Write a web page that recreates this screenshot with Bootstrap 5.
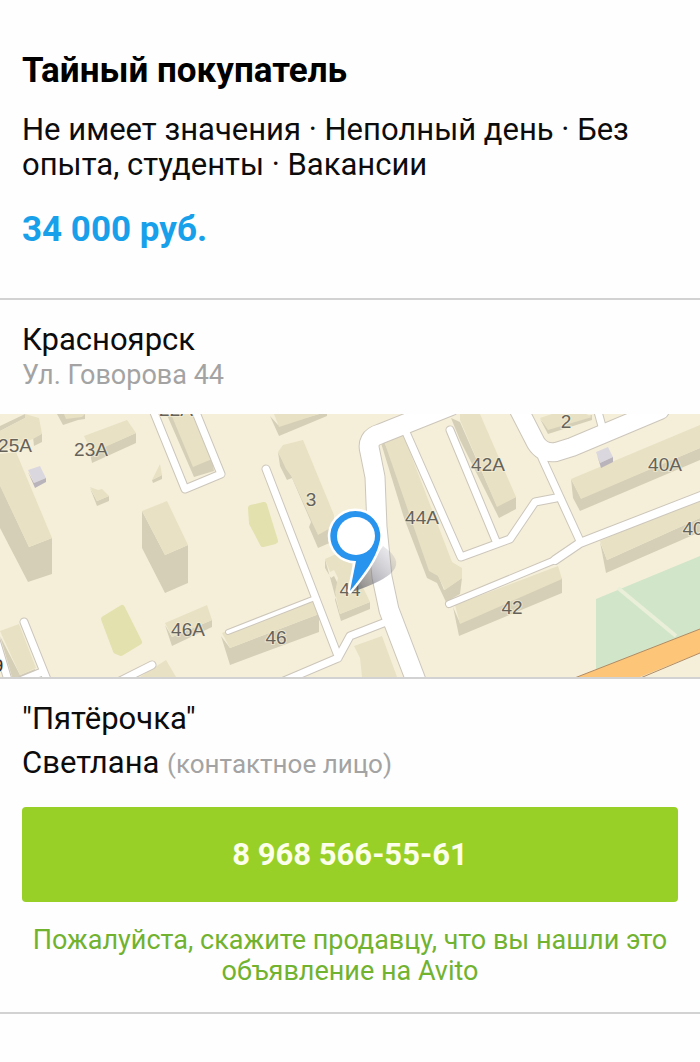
<!DOCTYPE html>
<html lang="ru">
<head>
<meta charset="utf-8">
<meta name="viewport" content="width=device-width, initial-scale=1">
<title>Тайный покупатель</title>
<link href="https://cdn.jsdelivr.net/npm/bootstrap@5.3.0/dist/css/bootstrap.min.css" rel="stylesheet">
<style>
  body { font-family: Roboto, "Liberation Sans", sans-serif; font-size: 31px; line-height: 35px; color: #0c0c0c; background: #fefefe; }
  .px-page { padding-left: 22px; padding-right: 22px; }
  .section-line { border-bottom: 2px solid #d2d2d2; }
  .summary { padding-top: 51px; padding-bottom: 48px; }
  .ad-title { font-size: 35px; line-height: 40px; font-weight: 700; color: #000; margin-bottom: 21px; }
  .ad-price { font-size: 35px; line-height: 40px; font-weight: 700; color: #18a0ea; margin-top: 28px; }
  .place { padding-top: 22px; padding-bottom: 21px; }
  .city-name { font: inherit; margin-bottom: 1px; }
  .soft { font-size: 27px; color: #a3a3a3; }
  .role { font-size: 26px; color: #a3a3a3; }
  .city-map { width: 100%; height: auto; }
  .contacts { padding-top: 22px; padding-bottom: 25px; }
  .company { margin-bottom: 9px; }
  .btn-call { --bs-btn-bg: #98d027; --bs-btn-color: #fcffea; --bs-btn-hover-bg: #8bc220; --bs-btn-hover-color: #fff; --bs-btn-border-width: 0; --bs-btn-border-radius: 4px; font-size: 31px; line-height: 35px; font-weight: 700; padding: 30px 12px; margin-top: 25px; }
  .note { font-size: 27px; line-height: 31px; color: #71b22f; margin-top: 23px; }
</style>
</head>
<body>
<main>
  <section class="summary px-page section-line">
    <h1 class="ad-title">Тайный покупатель</h1>
    <p class="mb-0">Не имеет значения · Неполный день · Без опыта, студенты · Вакансии</p>
    <p class="ad-price mb-0">34 000 руб.</p>
  </section>

  <section>
    <div class="place px-page">
      <h2 class="city-name">Красноярск</h2>
      <p class="soft mb-0">Ул. Говорова 44</p>
    </div>
    <svg class="city-map d-block section-line" viewBox="0 4 700 263" role="img" aria-label="Карта: Ул. Говорова 44">
      <defs>
        <linearGradient id="shade" x1="0" y1="1" x2="1" y2="0">
          <stop offset="0" stop-color="#55555f" stop-opacity=".75"/><stop offset="1" stop-color="#9090a0" stop-opacity=".1"/>
        </linearGradient>
      </defs>
      <rect y="4" width="700" height="263" fill="#f5efd9"/>
      <!-- grass and park -->
      <g fill="#e3e1ae" stroke="#e3e1ae" stroke-width="6" stroke-linejoin="round">
        <path d="M104 209L122 198L139 232L121 243L116 241Z"/><path d="M251 98L264 95L275 131L263 134L252 113Z"/>
      </g>
      <path d="M596 189L700 146V220L596 262Z" fill="#d1e5c9"/>
      <path d="M618 178L676 226" stroke="#e9efd8" stroke-width="4"/>
      <path d="M572 269L700 219V243L635 269Z" fill="#fdc578"/>
      <path d="M572 269L700 219M638 269L700 243" stroke="#b18b63" fill="none"/>
      <!-- building walls -->
      <g fill="#d6cfb8">
        <path d="M0 16L25 4V8L0 21ZM33 27L42 23V32L34 36Z"/>
        <path d="M57 4H85V9L78 10L63 15Z"/>
        <path d="M90 43L136 23V33L92 53Z"/>
        <path d="M167 5H172L193 54L212 49L214 61L194 67Z"/>
        <path d="M0 75L29 137L52 128V164L28 172L0 118Z"/>
        <path d="M90 78L97 91L109 86V91L97 96ZM152 70L162 65V69L153 73Z"/>
        <path d="M142 101L165 145L188 135V173L165 183L142 138Z"/>
        <path d="M165 215L172 227L212 210V217L172 236Z"/>
        <path d="M221 226L230 238L319 204V222L230 255Z"/>
        <path d="M0 226L20 265L35 259V267H12Z"/>
        <path d="M270 6L278 15L327 2V6L279 26Z"/>
        <path d="M278 42L280 56L287 70L292 68L311 112L309 117L318 138L334 131V116L318 123L292 67Z"/>
        <path d="M325 149L325 158L331 168L334 166L338 174L335 190L341 211L370 199V192L340 204Z"/>
        <path d="M381 33L384 31L444 180L462 168L460 184L446 192L437 173L427 168L404 108Z"/>
        <path d="M460 12L497 96L516 87V99L499 108L460 30L451 8Z"/>
        <path d="M540 9L548 18L592 5V10L548 24Z"/>
        <path d="M571 69L581 88L700 38V50L580 101L573 88Z"/>
        <path d="M600 132L607 150L700 108V122L606 163Z"/>
        <path d="M453 197L460 213L562 168V183L459 226Z"/>
      </g>
      <!-- roofs -->
      <g fill="#e8e1c4">
        <path d="M0 21L25 8V4L39 8L42 24L33 29L0 41Z"/>
        <path d="M64 4H85L82 7L66 9Z"/>
        <path d="M84 26L127 10L136 23L92 43Z"/>
        <path d="M171 4H198L212 49L193 57Z"/>
        <path d="M0 44L16 42L52 128L29 137L0 76Z"/>
        <path d="M90 77L98 80L102 79L109 86L97 91ZM152 70L160 54L162 65Z"/>
        <path d="M142 101L167 91L188 135L165 145Z"/>
        <path d="M165 213L207 195L212 210L172 227Z"/>
        <path d="M222 223L312 188L319 204L230 238Z"/>
        <path d="M0 221L19 214L36 258L20 265Z"/>
        <path d="M274 4H319L279 17Z"/>
        <path d="M278 42L283 35L303 30L334 105V116L318 125L311 110L292 67L286 59Z"/>
        <path d="M325 149L345 140L370 192L340 204L335 182L338 168L334 160L330 162Z"/>
        <path d="M354 236L382 226L397 267H362L360 248Z"/>
        <path d="M155 257L166 250L176 267H140Z"/>
        <path d="M384 31L403 24L452 152L462 158V168L445 180L438 166L429 161Z"/>
        <path d="M460 10V4H480L516 87L497 97Z"/>
        <path d="M540 8L552 4H586L592 7L548 20Z"/>
        <path d="M571 69L700 15V38L581 89Z"/>
        <path d="M600 131L700 88V108L607 150Z"/>
        <path d="M455 195L558 156L562 169L460 214Z"/>
      </g>
      <path d="M28 60L40 56L46 68L34 73ZM596 42L608 37L613 47L600 53Z" fill="#dbd7df"/>
      <path d="M34 73L46 68V72L35 78L28 62ZM600 53L613 47V52L601 58L597 45Z" fill="#b9b4bc"/>
      <!-- streets: outline first, surface over it -->
      <g fill="none" stroke="#ccc6bb" stroke-linejoin="round" stroke-linecap="round">
        <path stroke-width="9" d="M153 0L185 79L221 64L195 0M24 212L48 272M-4 230L8 270M20 271L42 262M118 272L152 255M266 59L338 246M338 248L350 226L386 212M338 248L284 271M405 20L461 147L510 129L535 92L556 88M450 20L496 131M597 -2L603 20M542 48L580 131"/>
        <path stroke-width="6" d="M228 222L315 188"/>
        <path stroke-width="10" d="M706 84L580 133L555 150"/>
        <path stroke-width="8" d="M555 150L449 194"/>
        <path stroke-width="21" d="M450 -4L380 24Q366 28 370 42L375 67L377 117L382 167L389 200L418 276"/>
        <path stroke-width="20" d="M517 -4L536 33Q543 44 556 42L572 37L660 0"/>
      </g>
      <g fill="none" stroke="#fff" stroke-linejoin="round" stroke-linecap="round">
        <path stroke-width="7" d="M153 0L185 79L221 64L195 0M24 212L48 272M-4 230L8 270M20 271L42 262M118 272L152 255M266 59L338 246M338 248L350 226L386 212M338 248L284 271M405 20L461 147L510 129L535 92L556 88M450 20L496 131M597 -2L603 20M542 48L580 131"/>
        <path stroke-width="4" d="M228 222L315 188"/>
        <path stroke-width="8" d="M706 84L580 133L555 150"/>
        <path stroke-width="6" d="M555 150L449 194"/>
        <path stroke-width="19" d="M450 -4L380 24Q366 28 370 42L375 67L377 117L382 167L389 200L418 276"/>
        <path stroke-width="18" d="M517 -4L536 33Q543 44 556 42L572 37L660 0"/>
      </g>
      <!-- house numbers -->
      <g font-family="Liberation Sans, sans-serif" font-size="19" text-anchor="middle" fill="#65625a" stroke="#f5efd9" stroke-width="2" stroke-opacity=".7" paint-order="stroke">
        <text x="15" y="42">25А</text><text x="91" y="46">23А</text><text x="176" y="6">22А</text>
        <text x="311" y="96">3</text><text x="422" y="114">44А</text><text x="488" y="61">42А</text>
        <text x="566" y="18">2</text><text x="665" y="61">40А</text><text x="693" y="125">40</text>
        <text x="512" y="204">42</text><text x="276" y="234">46</text><text x="188" y="226">46А</text>
        <text x="350" y="186">44</text><text x="-2" y="262" fill="#333">9</text>
      </g>
      <!-- pin -->
      <path d="M352 182L383 136Q403 150 393 161Q385 171 352 182Z" fill="url(#shade)"/>
      <path d="M350 181L356 151A25 25 0 1 1 379 134C376 148 364 164 350 181Z" fill="#2994ee" stroke="#fff" stroke-width="5" stroke-linejoin="round" paint-order="stroke"/>
      <circle cx="356" cy="126" r="19" fill="#fff"/>
    </svg>
  </section>

  <section class="contacts px-page section-line">
    <p class="company">"Пятёрочка"</p>
    <p class="mb-0">Светлана <span class="role">(контактное лицо)</span></p>
    <button type="button" class="btn btn-call d-block w-100">8 968 566-55-61</button>
    <p class="note text-center mb-0">Пожалуйста, скажите продавцу, что вы нашли это объявление на Avito</p>
  </section>
</main>
<script src="https://cdn.jsdelivr.net/npm/bootstrap@5.3.0/dist/js/bootstrap.bundle.min.js"></script>
</body>
</html>
